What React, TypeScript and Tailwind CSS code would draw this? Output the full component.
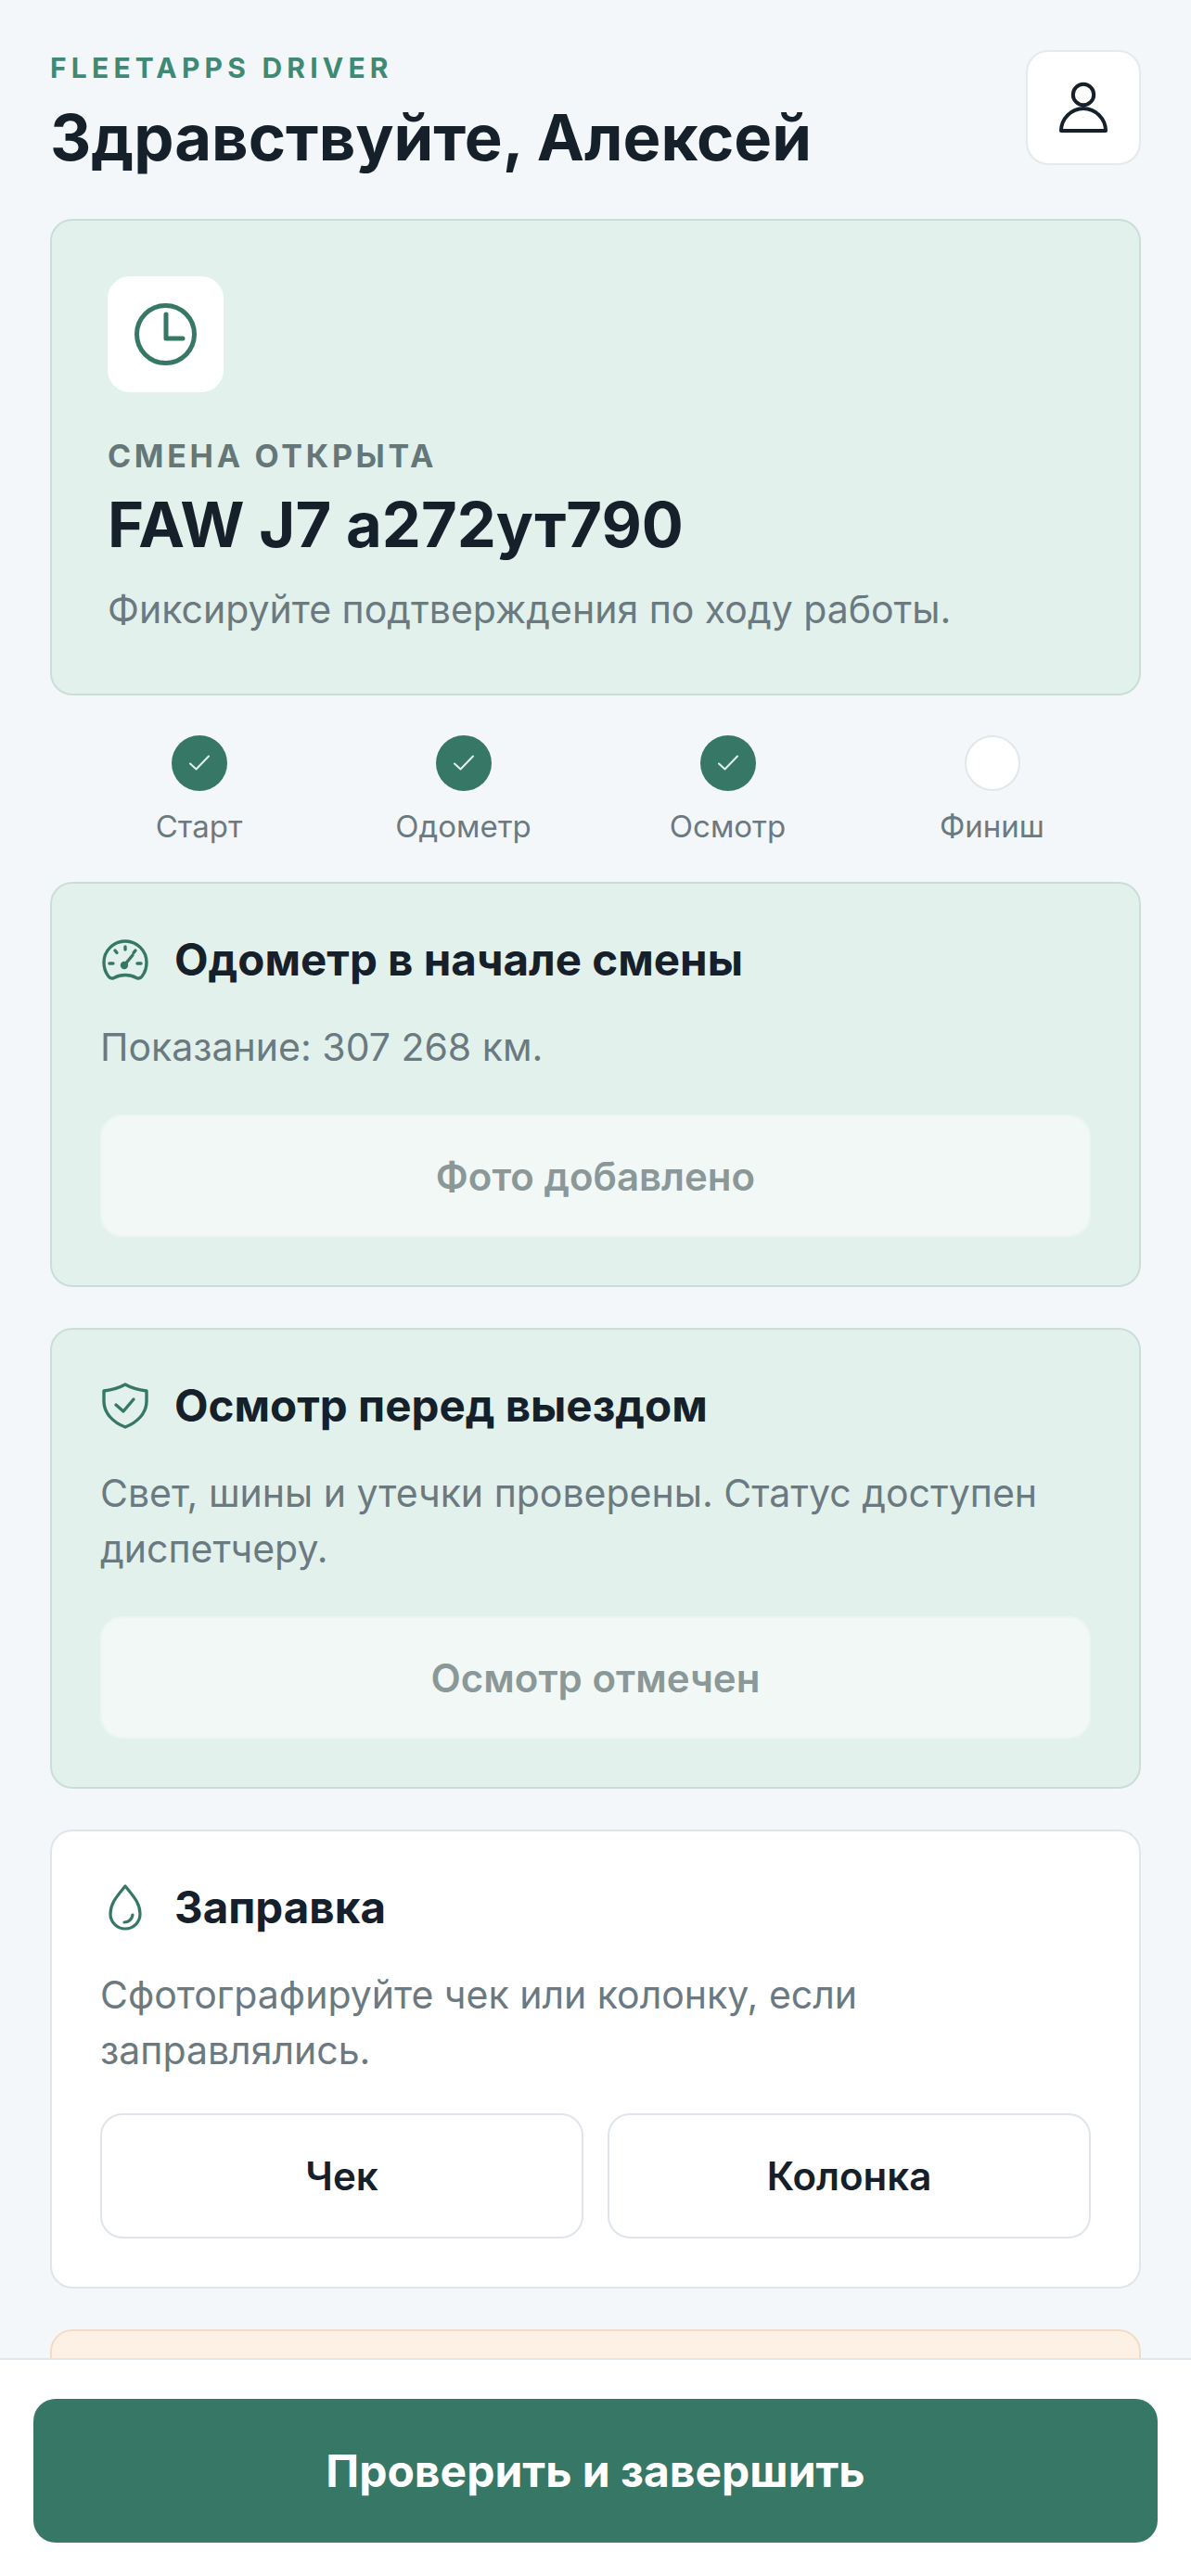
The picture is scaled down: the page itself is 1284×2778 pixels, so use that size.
import type { ReactNode } from "react"

function GaugeIcon() {
    return (
        <svg viewBox="0 0 50 46" className="w-[50px] h-[46px]" fill="none" stroke="currentColor" strokeWidth="3.4" strokeLinecap="round" strokeLinejoin="round">
            <path d="M7 41C3.500 36.500 2 31.500 2 26 2 13 12.500 3 25 3s23 10 23 23c0 5.500-1.500 10.500-5 15-1.500 2-4 2.500-6 1.500-3.500-2-7.500-3-12-3s-8.500 1-12 3c-2 1-4.500.5-6-1.500z" />
            <path d="M25 9v3M14 13l2 2.500M36 13l-2 2.500M8 27h4M38 27h4" />
            <path d="M24 29l9-11" />
            <circle cx="24" cy="29" r="2.500" fill="currentColor" />
        </svg>
    )
}

function ShieldIcon() {
    return (
        <svg viewBox="0 0 50 50" className="w-[50px] h-[50px]" fill="none" stroke="currentColor" strokeWidth="3.4" strokeLinecap="round" strokeLinejoin="round">
            <path d="M25 2C18 6 10 8 2 9v11c0 13 10 23 23 28 13-5 23-15 23-28V9C40 8 32 6 25 2z" />
            <path d="M15 24l8 7 11-13" />
        </svg>
    )
}

function DropIcon() {
    return (
        <svg viewBox="0 0 36 50" className="w-[36px] h-[50px]" fill="none" stroke="currentColor" strokeWidth="3.2" strokeLinecap="round" strokeLinejoin="round">
            <path d="M18 2C10 12 2 20 2 32a16 16 0 0 0 32 0C34 20 26 12 18 2z" />
            <path d="M26 33a9 9 0 0 1-9 8" />
        </svg>
    )
}

function Step({ label, done }: { label: string; done: boolean }) {
    return (
        <div className="flex flex-col items-center">
            <div className={done
                ? "w-[60px] h-[60px] rounded-full bg-[#367766] flex items-center justify-center"
                : "w-[60px] h-[60px] rounded-full bg-white border-2 border-[#e2e8ea]"}>
                {done && (
                    <svg viewBox="0 0 30 30" className="w-[30px] h-[30px]" fill="none" stroke="#e3f1ec" strokeWidth="2" strokeLinecap="round" strokeLinejoin="round">
                        <path d="M5 15.500l6.500 6L25 7.500" />
                    </svg>
                )}
            </div>
            <span className="mt-[18px] text-[33px] leading-[40px] text-[#6b7a80]">{label}</span>
        </div>
    )
}

function Card({ icon, title, done, children }: { icon: ReactNode; title: string; done?: boolean; children: ReactNode }) {
    return (
        <section className={done
            ? "rounded-[24px] border-2 border-[#c9ded7] bg-[#e3f1ec] px-[52px] pt-[50px] pb-[52px]"
            : "rounded-[24px] border-2 border-[#dfe5ea] bg-white px-[52px] pt-[50px] pb-[52px]"}>
            <div className="flex items-center h-[64px]">
                <div className="w-[54px] flex justify-center text-[#367766]">{icon}</div>
                <h2 className="ml-[26px] text-[47.500px] leading-[64px] font-bold text-[#15202b]">{title}</h2>
            </div>
            {children}
        </section>
    )
}

function DoneButton({ label }: { label: string }) {
    return (
        <div className="mt-[43px] h-[132px] rounded-[24px] border-2 border-[#edf5f2] bg-[#f1f8f6] flex items-center justify-center text-[42px] font-semibold text-[#8a9899]">
            {label}
        </div>
    )
}

export default function App() {
    return (
        <div className="h-[2778px] flex flex-col bg-[#f4f7f9] font-['Inter',sans-serif] overflow-hidden">

            <main className="flex-1 min-h-0 overflow-hidden px-[54px] pt-[54px]">

                <header className="flex justify-between items-start">
                    <div className="pt-[2px]">
                        <p className="text-[30px] leading-[34px] font-bold tracking-[5.200px] text-[#3f8a75]">FLEETAPPS DRIVER</p>
                        <h1 className="mt-[18px] text-[68.700px] leading-[80px] font-bold text-[#15202b]">Здравствуйте, Алексей</h1>
                    </div>
                    <button className="w-[124px] h-[124px] rounded-[24px] bg-white border-2 border-[#e4e9ec] flex items-center justify-center">
                        <svg viewBox="0 0 60 60" className="w-[60px] h-[60px]" fill="none" stroke="#15202b" strokeWidth="4" strokeLinejoin="round">
                            <circle cx="30" cy="16" r="11.200" />
                            <path d="M6 55C6 42 17 31 30 31S54 42 54 55z" />
                        </svg>
                    </button>
                </header>

                <section className="mt-[48px] h-[514px] rounded-[24px] border-2 border-[#c9ded7] bg-[#e3f1ec] px-[60px] pt-[60px]">
                    <div className="w-[125px] h-[125px] rounded-[24px] bg-white flex items-center justify-center text-[#367766]">
                        <svg viewBox="0 0 67 67" className="w-[67px] h-[67px]" fill="none" stroke="currentColor" strokeWidth="5" strokeLinecap="round" strokeLinejoin="round">
                            <circle cx="33.500" cy="33.500" r="31" />
                            <path d="M34 12v26h18" />
                        </svg>
                    </div>
                    <p className="mt-[51px] text-[34px] leading-[36px] font-bold tracking-[3.700px] text-[#66777a]">СМЕНА ОТКРЫТА</p>
                    <p className="mt-[16px] text-[66.800px] leading-[80px] font-bold text-[#15202b]">FAW J7 а272ут790</p>
                    <p className="mt-[24px] text-[41px] leading-[54px] text-[#6b7a80]">Фиксируйте подтверждения по ходу работы.</p>
                </section>

                <div className="mt-[43px] mx-[18px] grid grid-cols-4">
                    <Step label="Старт" done />
                    <Step label="Одометр" done />
                    <Step label="Осмотр" done />
                    <Step label="Финиш" done={false} />
                </div>

                <div className="mt-[40px] flex flex-col gap-[44px]">
                    <Card done title="Одометр в начале смены" icon={<GaugeIcon />}>
                        <p className="mt-[32px] text-[41px] leading-[60px] text-[#6b7a80]">Показание: 307 268 км.</p>
                        <DoneButton label="Фото добавлено" />
                    </Card>

                    <Card done title="Осмотр перед выездом" icon={<ShieldIcon />}>
                        <p className="mt-[32px] text-[41px] leading-[60px] text-[#6b7a80]">Свет, шины и утечки проверены. Статус доступен диспетчеру.</p>
                        <DoneButton label="Осмотр отмечен" />
                    </Card>

                    <Card title="Заправка" icon={<DropIcon />}>
                        <p className="mt-[32px] text-[41px] leading-[60px] text-[#6b7a80]">Сфотографируйте чек или колонку, если заправлялись.</p>
                        <div className="mt-[38px] grid grid-cols-2 gap-[26px]">
                            <button className="h-[135px] rounded-[24px] border-2 border-[#dfe5ea] bg-white text-[42px] font-semibold text-[#15202b]">Чек</button>
                            <button className="h-[135px] rounded-[24px] border-2 border-[#dfe5ea] bg-white text-[42px] font-semibold text-[#15202b]">Колонка</button>
                        </div>
                    </Card>

                    <section className="h-[300px] rounded-[24px] border-2 border-[#f3dcc6] bg-[#fdf1e6]" />
                </div>

            </main>

            <footer className="h-[235px] shrink-0 border-t-2 border-[#e1e6ea] bg-white px-[36px] pt-[42px]">
                <button className="w-full h-[155px] rounded-[24px] bg-[#367766] text-[48px] font-bold text-white">
                    Проверить и завершить
                </button>
            </footer>

        </div>
    )
}
